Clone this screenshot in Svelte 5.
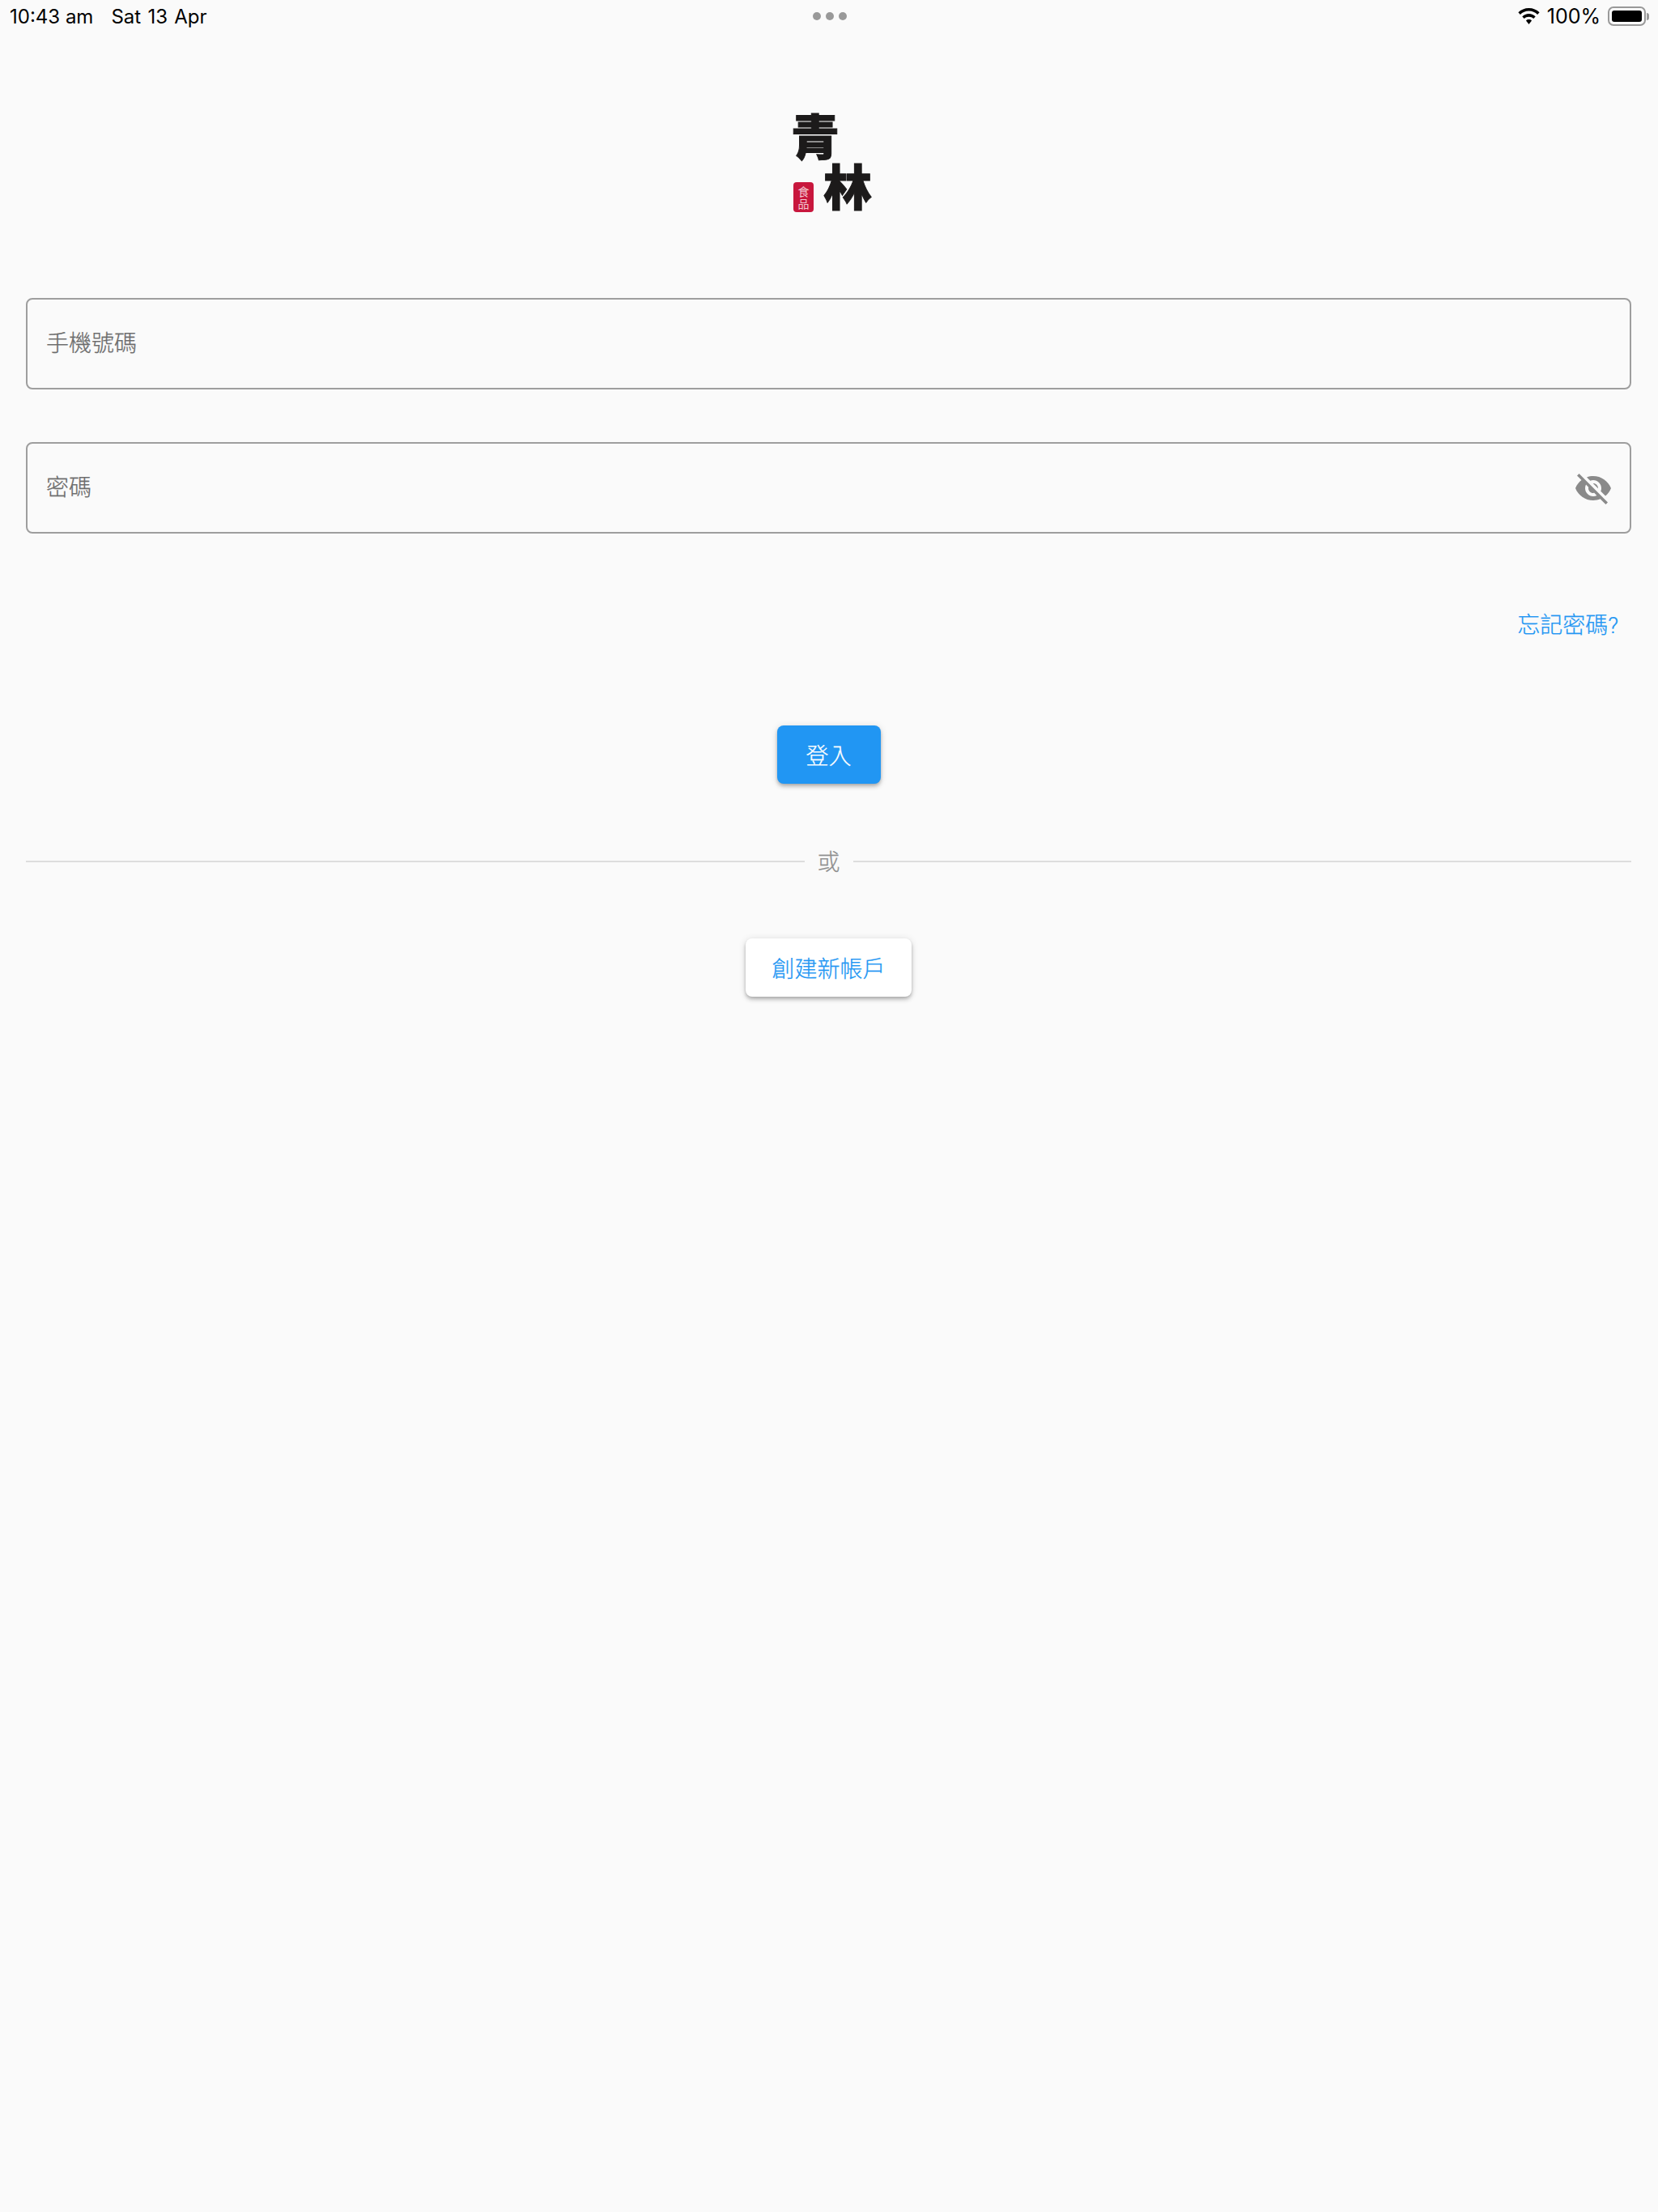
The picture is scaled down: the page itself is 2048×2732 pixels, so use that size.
<script>
	let phone = "";
	let password = "";
</script>

<div class="page">
	<header class="status">
		<div class="status-left">
			<span>10:43 am</span>
			<span class="date">Sat 13 Apr</span>
		</div>
		<div class="dots"><i></i><i></i><i></i></div>
		<div class="status-right">
			<svg class="wifi" viewBox="0 0 27 20" width="27" height="20">
				<path d="M13.5 0C8.4 0 3.8 2 .4 5.300l2.500 2.600C5.600 5.200 9.300 3.600 13.500 3.600s7.900 1.600 10.600 4.300l2.500-2.600C23.200 2 18.600 0 13.500 0z" />
				<path d="M13.500 7.100c-3.200 0-6.100 1.300-8.200 3.300l2.500 2.600c1.500-1.400 3.500-2.300 5.700-2.300s4.200.9 5.700 2.300l2.500-2.600c-2.100-2-5-3.300-8.200-3.300z" />
				<path d="M13.500 14c-1.400 0-2.600.5-3.500 1.400l3.500 4.600 3.500-4.600c-.9-.9-2.100-1.400-3.500-1.400z" />
			</svg>
			<span class="pct">100%</span>
			<div class="battery"><div class="level"></div></div>
			<div class="nub"></div>
		</div>
	</header>

	<div class="logo">
		<span class="qing">青</span>
		<div class="logo-row">
			<div class="seal"><span>食</span><span>品</span></div>
			<span class="lin">林</span>
		</div>
	</div>

	<form class="form" on:submit|preventDefault>
		<label class="field">
			<input type="text" bind:value={phone} placeholder="手機號碼" />
		</label>
		<label class="field second">
			<input type="password" bind:value={password} placeholder="密碼" />
			<svg class="eye" viewBox="0 0 24 24" width="48" height="48">
				<path d="M12 7c2.760 0 5 2.240 5 5 0 .65-.13 1.260-.36 1.830l2.920 2.920c1.510-1.260 2.700-2.890 3.430-4.750-1.730-4.390-6-7.500-11-7.500-1.400 0-2.740.25-3.980.7l2.160 2.160C10.740 7.130 11.350 7 12 7zM2 4.270l2.280 2.280.46.46C3.080 8.300 1.780 10.020 1 12c1.730 4.390 6 7.500 11 7.500 1.550 0 3.030-.3 4.380-.84l.42.42L19.730 22 21 20.730 3.270 3 2 4.270zM7.530 9.800l1.550 1.550c-.05.21-.08.43-.08.65 0 1.660 1.340 3 3 3 .22 0 .44-.03.65-.08l1.550 1.550c-.67.33-1.410.53-2.200.53-2.760 0-5-2.240-5-5 0-.79.2-1.530.53-2.200zm4.310-.78l3.150 3.150.02-.16c0-1.660-1.340-3-3-3l-.17.01z" />
			</svg>
		</label>

		<div class="forgot"><a href="#forgot">忘記密碼?</a></div>

		<div class="center login-wrap">
			<button class="btn primary" type="submit">登入</button>
		</div>

		<div class="divider">
			<span class="line"></span>
			<span class="or">或</span>
			<span class="line"></span>
		</div>

		<div class="center create-wrap">
			<button class="btn secondary" type="button">創建新帳戶</button>
		</div>
	</form>
</div>

<style>
	:global(body) {
		background: #fafafa;
	}

	.page {
		min-height: 2732px;
		background: #fafafa;
		font-family: Roboto, "Noto Sans CJK TC", sans-serif;
		font-size: 28px;
		font-weight: 300;
		-webkit-text-stroke: 0.25px;
	}

	.status {
		display: grid;
		grid-template-columns: 1fr auto 1fr;
		align-items: center;
		height: 40px;
		padding: 0 11px 0 12px;
		font-family: Inter, "Liberation Sans", sans-serif;
		font-size: 24px;
		font-weight: 400;
		-webkit-text-stroke: 0;
		color: #000;
	}
	.status-left {
		display: flex;
		gap: 22px;
	}
	.date {
		word-spacing: 1.5px;
	}
	.dots {
		display: flex;
		gap: 6px;
	}
	.dots i {
		width: 10px;
		height: 10px;
		border-radius: 50%;
		background: #999;
	}
	.status-right {
		display: flex;
		align-items: center;
		justify-content: flex-end;
	}
	.wifi {
		fill: #000;
		margin-right: 9px;
	}
	.pct {
		font-size: 25px;
	}
	.battery {
		box-sizing: border-box;
		width: 47px;
		height: 24px;
		margin-left: 9px;
		padding: 3px;
		border: 2px solid #999;
		border-radius: 7px;
	}
	.level {
		height: 100%;
		background: #000;
		border-radius: 3px;
	}
	.nub {
		width: 3px;
		height: 9px;
		margin-left: 1px;
		background: #999;
		border-radius: 0 3px 3px 0;
	}

	.logo {
		box-sizing: border-box;
		display: flex;
		flex-direction: column;
		width: 108px;
		margin: 96px auto 0;
		padding-left: 10px;
		color: #1c1a1a;
		font-family: "Noto Sans CJK TC", sans-serif;
		font-weight: 900;
		line-height: 1;
		-webkit-text-stroke: 1px #1c1a1a;
		text-shadow: 0 0 4px #fff;
	}
	.qing {
		font-size: 60px;
		height: 62px;
		margin-left: -3px;
	}
	.logo-row {
		display: flex;
		align-items: flex-end;
		gap: 12px;
	}
	.lin {
		font-size: 60px;
		line-height: 60px;
		height: 60px;
		margin-bottom: 3px;
	}
	.seal {
		display: flex;
		flex-direction: column;
		align-items: center;
		justify-content: center;
		flex: none;
		width: 25px;
		height: 37px;
		margin-bottom: -1px;
		border-radius: 4px;
		background: #c8173d;
		color: #f3c6cf;
		font-size: 14px;
		font-weight: 400;
		line-height: 15px;
		-webkit-text-stroke: 0;
		text-shadow: none;
	}

	.form {
		display: flex;
		flex-direction: column;
		margin: 107px 33px 0 32px;
	}
	.field {
		box-sizing: border-box;
		display: flex;
		align-items: center;
		height: 113px;
		padding: 0 21px 0 23px;
		border: 2px solid #9e9e9e;
		border-radius: 8px;
	}
	.second {
		margin-top: 65px;
	}
	input {
		flex: 1;
		min-width: 0;
		padding: 0;
		border: 0;
		outline: none;
		background: none;
		font: inherit;
		color: #333;
	}
	input::placeholder {
		color: #6b6b6b;
		opacity: 1;
	}
	.eye {
		fill: #8a8a8a;
		flex: none;
	}

	.forgot {
		display: flex;
		justify-content: flex-end;
		margin-top: 96px;
		padding-right: 16px;
		line-height: 36px;
	}
	.forgot a {
		color: #2196f3;
		text-decoration: none;
	}

	.center {
		display: flex;
		justify-content: center;
	}
	.login-wrap {
		margin-top: 105px;
	}
	.create-wrap {
		margin-top: 75px;
	}
	.btn {
		height: 72px;
		padding: 0 32px;
		border: 0;
		border-radius: 8px;
		font: inherit;
		box-shadow: 0 2px 4px -1px rgba(0, 0, 0, 0.2), 0 4px 5px 0 rgba(0, 0, 0, 0.14), 0 1px 10px 0 rgba(0, 0, 0, 0.12);
	}
	.primary {
		min-width: 128px;
		background: #2196f3;
		color: #fff;
	}
	.secondary {
		background: #fff;
		color: #2196f3;
	}

	.divider {
		display: flex;
		align-items: center;
		height: 40px;
		margin-top: 76px;
	}
	.line {
		flex: 1;
		height: 2px;
		background: #ddd;
	}
	.or {
		width: 60px;
		padding-top: 3px;
		text-align: center;
		color: #8f8f8f;
		line-height: 37px;
	}
</style>
